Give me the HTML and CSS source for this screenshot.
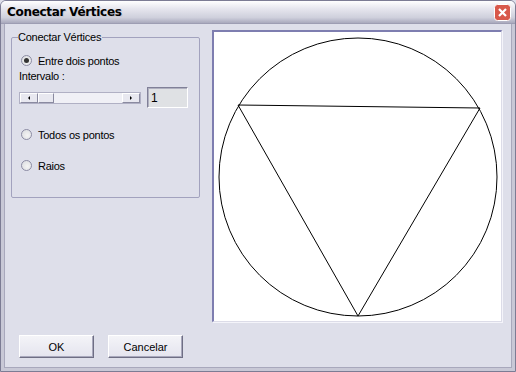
FILE: index.html
```html
<!DOCTYPE html>
<html>
<head>
<meta charset="utf-8">
<link rel="stylesheet" href="styles.css">
</head>
<body>
<div class="window">
  <div class="titlebar">
    <span class="title">Conectar Vértices</span>
    <span class="close"><svg width="17" height="17" viewBox="0 0 17 17"><rect x="0.5" y="0.5" width="16" height="16" rx="3" fill="#d8584a" stroke="#fff"/><path d="M5 5 L12 12 M12 5 L5 12" stroke="#fff" stroke-width="2.2"/></svg></span>
  </div>
  <div class="body">
    <div class="main">
      <fieldset class="group">
        <legend>Conectar Vértices</legend>
        <div class="radio-row"><span class="radio checked"></span><span>Entre dois pontos</span></div>
        <div class="label">Intervalo :</div>
        <div class="slider-row">
          <div class="scrollbar">
            <span class="sb-btn"><span class="arr left"></span></span>
            <span class="sb-thumb"></span>
            <span class="sb-track"></span>
            <span class="sb-btn"><span class="arr right"></span></span>
          </div>
          <div class="textbox">1</div>
        </div>
        <div class="radio-row r2"><span class="radio"></span><span>Todos os pontos</span></div>
        <div class="radio-row r3"><span class="radio"></span><span>Raios</span></div>
      </fieldset>
      <div class="canvas">
        <svg width="286" height="288" viewBox="214 32 286 288">
          <circle cx="358" cy="177" r="139" fill="none" stroke="#000" stroke-width="1"/>
          <polygon points="238,105 480,108 358,316" fill="none" stroke="#000" stroke-width="1"/>
        </svg>
      </div>
    </div>
    <div class="buttons">
      <button class="btn">OK</button>
      <button class="btn">Cancelar</button>
    </div>
  </div>
</div>
</body>
</html>
```
FILE: styles.css
```css
html, body { margin: 0; padding: 0; }
body { width: 516px; height: 372px; overflow: hidden; background: #dedfea; font-family: "Liberation Sans", Arial, sans-serif; font-size: 11px; color: #000; }
.window { width: 516px; height: 372px; box-sizing: border-box; display: flex; flex-direction: column; background: #dedfea; border: 1px solid #7c7c94; border-top-left-radius: 6px; border-top-right-radius: 6px; overflow: hidden; }
.titlebar { height: 22px; flex: none; display: flex; align-items: center; justify-content: space-between; padding: 0 4px 0 6px; background: linear-gradient(#ffffff 0%, #e6e6ee 35%, #cfd0dc 75%, #a9a9bd 100%); border-bottom: 1px solid #9d9db3; }
.title { font-family: "DejaVu Sans", sans-serif; font-weight: bold; font-size: 12px; letter-spacing: -0.3px; color: #000; text-shadow: 1px 1px 0 #c8c8d4; }
.close { display: flex; margin-top: 1px; }
.body { flex: 1; display: flex; flex-direction: column; border-left: 3px solid #c8c8d6; border-right: 3px solid #c8c8d6; border-bottom: 3px solid #c8c8d6; box-shadow: inset 1px 0 0 #a8a8bc, inset -1px 0 0 #a8a8bc, inset 0 -1px 0 #a8a8bc; padding: 6px 10px 0 7px; }
.main { display: flex; gap: 12px; align-items: flex-start; }
.group { margin: 1px 0 0 0; width: 189px; height: 167px; box-sizing: border-box; border: 1px solid #a2a2be; border-radius: 2px; padding: 10px 6px 0 7px; letter-spacing: -0.25px; }
.group legend { padding: 0 1px 0 0; margin-left: -1px; line-height: 13px; }
.radio-row { display: flex; align-items: center; gap: 6px; height: 13px; margin-left: 2px; }
.radio { width: 11px; height: 11px; border-radius: 50%; box-sizing: border-box; border: 1px solid #8c8ca4; background: radial-gradient(circle at 60% 60%, #f4f4f4, #d8dade); position: relative; }
.radio.checked::after { content: ""; position: absolute; left: 2px; top: 2px; width: 5px; height: 5px; border-radius: 50%; background: #333; }
.label { margin-top: 2px; line-height: 14px; }
.slider-row { display: flex; align-items: center; gap: 6px; margin-top: 4px; }
.scrollbar { width: 122px; height: 12px; display: flex; background: #f0f0f6; border: 1px solid #b0b0c4; box-sizing: border-box; }
.sb-btn, .sb-thumb { flex: none; height: 10px; box-sizing: border-box; border: 1px solid; border-color: #fff #8a8aa0 #8a8aa0 #fff; background: #e8e8f0; display: flex; align-items: center; justify-content: center; }
.sb-btn { width: 18px; }
.sb-thumb { width: 16px; }
.sb-track { flex: 1; }
.arr { width: 0; height: 0; border-top: 2px solid transparent; border-bottom: 2px solid transparent; }
.arr.left { border-right: 2px solid #000; }
.arr.right { border-left: 2px solid #000; }
.textbox { width: 41px; height: 21px; box-sizing: border-box; border: 1px solid; border-color: #808098 #fff #fff #808098; box-shadow: inset 1px 1px 0 #b0b0c0; background: #dfe1e4; font-size: 12px; padding: 3px 0 0 3px; line-height: 14px; }
.r2 { margin-top: 20px; }
.r3 { margin-top: 18px; }
.canvas { width: 290px; height: 292px; box-sizing: border-box; border-style: solid; border-width: 2px 1px 1px 2px; border-color: #7e7eb0 #dcdce8 #dcdce8 #7e7eb0; box-shadow: 1px 1px 0 #f4f4fa; background: #fff; }
.canvas svg { display: block; }
.buttons { display: flex; gap: 14px; margin-top: 13px; padding-left: 8px; }
.btn { width: 75px; height: 23px; box-sizing: border-box; font-family: "Liberation Sans", Arial, sans-serif; font-size: 11px; color: #000; background: linear-gradient(#f4f4f8, #e4e4ee); border: 1px solid; border-color: #fff #6e6e84 #6e6e84 #fff; box-shadow: inset -1px -1px 0 #a8a8bc; padding: 0; }
```
